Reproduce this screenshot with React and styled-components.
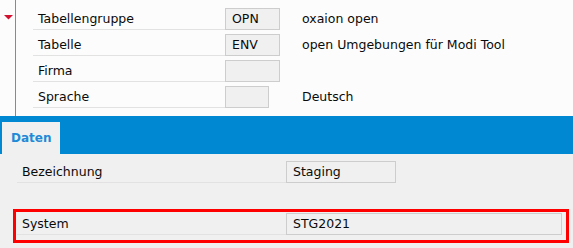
import React from "react";
import styled, {createGlobalStyle} from 'styled-components';

const GlobalStyle = createGlobalStyle`
  body { margin: 0; background: #f0f0f0; font-family: "DejaVu Sans", Verdana, sans-serif; font-size: 12.5px; color: #0a0a0a; }
`;

const Page = styled.div`width: 573px; height: 248px; overflow: hidden; display: flex; flex-direction: column;`;

const Header = styled.div`background: #fcfcfc; height: 116px; display: flex;`;
const Gutter = styled.div`width: 16px; flex: 0 0 16px; border-right: 1px solid #8a8a8a; padding: 8px 0 0 4px; box-sizing: border-box;`;
const Rows = styled.div`margin-left: 17px; padding-top: 4px; display: flex; flex-direction: column;`;

const Row = styled.div`display: flex; align-items: flex-end; height: ${({h}) => h || 26}px;`;
const Label = styled.div`
  width: ${({w}) => w}px; height: 22px; box-sizing: border-box; padding: 1px 0 0 5px;
  line-height: 20px; border-bottom: 1px solid #e2e2e2; white-space: nowrap;
`;
const FieldCell = styled.div`width: ${({w}) => w}px; display: flex;`;
const Box = styled.div`
  width: ${({w}) => w}px; height: 22px; box-sizing: border-box; border: 1px solid #cdcdcd;
  background: #f0f0f0; padding-left: 6px; line-height: 20px; white-space: nowrap;
`;
const Desc = styled.div`height: 22px; line-height: 20px; padding-top: 1px; box-sizing: border-box; white-space: nowrap;`;

const TabBar = styled.div`background: #0089d2; height: 38px; display: flex; align-items: flex-end; padding-left: 2px;`;
const Tab = styled.div`background: #f0f0f0; height: 32px; line-height: 32px; padding: 0 9px; font-weight: bold; font-size: 12px; color: #1f8ad6;`;

const Panel = styled.div`flex: 1; background: #f0f0f0; padding: 3px 0 0 17px;`;
const Highlight = styled.div`
  width: fit-content; margin: 26px 0 0 -4px; border: 3px solid #ff0000; padding: 1px 4px 5px 1px;
`;

const Toggle = () => (
  <svg width="9" height="5" viewBox="0 0 9 5"><path d="M0 0H9L4.5 4.5Z" fill="#d21030"/></svg>
);

const headRows = [
  {label: 'Tabellengruppe', value: 'OPN', desc: 'oxaion open', w: 55},
  {label: 'Tabelle', value: 'ENV', desc: 'open Umgebungen für Modi Tool', w: 55},
  {label: 'Firma', value: '', desc: '', w: 55},
  {label: 'Sprache', value: '', desc: 'Deutsch', w: 44},
];

export default function App(){
  return(
    <Page>
      <GlobalStyle/>
      <Header>
        <Gutter><Toggle/></Gutter>
        <Rows>
          {headRows.map((r, i) => (
            <Row key={i}>
              <Label w={192}>{r.label}</Label>
              <FieldCell w={77}><Box w={r.w}>{r.value}</Box></FieldCell>
              <Desc>{r.desc}</Desc>
            </Row>
          ))}
        </Rows>
      </Header>
      <TabBar><Tab>Daten</Tab></TabBar>
      <Panel>
        <Row>
          <Label w={269}>Bezeichnung</Label>
          <Box w={110}>Staging</Box>
        </Row>
        <Highlight>
          <Row h={22}>
            <Label w={269}>System</Label>
            <Box w={276}>STG2021</Box>
          </Row>
        </Highlight>
      </Panel>
    </Page>
  );
}
